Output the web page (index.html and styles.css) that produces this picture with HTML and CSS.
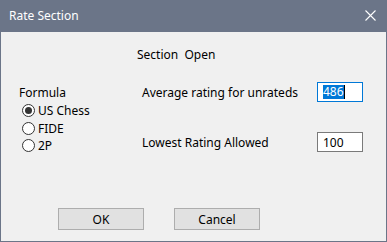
FILE: index.html
```html
<!DOCTYPE html>
<html lang="en">
<head>
    <meta charset="UTF-8">
    <title>Rate Section</title>
    <link rel="stylesheet" href="styles.css">
</head>
<body>
    <div class="window">
        <div class="titlebar">
            <span class="title">Rate Section</span>
            <svg class="close" width="11" height="11" viewBox="0 0 11 11">
                <path d="M0.5 0.5 L10.5 10.5 M10.5 0.5 L0.5 10.5" stroke="#ffffff" stroke-width="1.1" fill="none"/>
            </svg>
        </div>

        <div class="content">
            <div class="section-row">Section&nbsp;&nbsp;Open</div>

            <div class="main">
                <div class="formula">
                    <div class="formula-label">Formula</div>
                    <label class="radio"><span class="dot checked"></span>US Chess</label>
                    <label class="radio"><span class="dot"></span>FIDE</label>
                    <label class="radio last"><span class="dot"></span>2P</label>
                </div>

                <div class="fields">
                    <div class="field">
                        <span>Average rating for unrateds</span>
                        <div class="box focused"><span class="selected">486</span><span class="caret"></span></div>
                    </div>
                    <div class="field">
                        <span>Lowest Rating Allowed</span>
                        <div class="box">100</div>
                    </div>
                </div>
            </div>

            <div class="buttons">
                <button type="button">OK</button>
                <button type="button">Cancel</button>
            </div>
        </div>
    </div>
</body>
</html>
```

FILE: styles.css
```css
body {
    margin: 0;
    font-family: "Noto Sans", "Open Sans", sans-serif;
    font-size: 12px;
    color: #000000;
}

.window {
    width: 387px;
    height: 242px;
    box-sizing: border-box;
    border: 1px solid #6b7588;
    border-top: none;
    background-color: #f0f0f0;
    display: flex;
    flex-direction: column;
}

.titlebar {
    height: 31px;
    margin: 0 -1px;
    background-color: #6b7588;
    color: #ffffff;
    display: flex;
    align-items: center;
    justify-content: space-between;
    padding: 0 11px 1px 9px;
}

.title {
    font-size: 12px;
}

.content {
    flex: 1;
    display: flex;
    flex-direction: column;
}

.section-row {
    padding: 14px 0 0 136px;
    height: 18px;
    line-height: 18px;
}

.main {
    display: flex;
    margin-top: 18px;
}

.formula {
    width: 123px;
    padding: 2px 0 0 18px;
    display: flex;
    flex-direction: column;
}

.formula-label {
    height: 17px;
    line-height: 17px;
}

.radio {
    display: flex;
    align-items: center;
    gap: 3px;
    height: 17px;
    margin-top: 1px;
    padding-left: 3px;
}

.radio.last {
    margin-top: 0;
}

.dot {
    width: 13px;
    height: 13px;
    box-sizing: border-box;
    border: 1px solid #333333;
    border-radius: 50%;
    background-color: #ffffff;
    position: relative;
}

.dot.checked::after {
    content: "";
    position: absolute;
    left: 2px;
    top: 2px;
    width: 7px;
    height: 7px;
    border-radius: 50%;
    background-color: #333333;
}

.fields {
    display: flex;
    flex-direction: column;
    gap: 30px;
}

.field {
    display: flex;
    align-items: center;
    width: 221px;
    justify-content: space-between;
}

.box {
    width: 46px;
    height: 20px;
    box-sizing: border-box;
    border: 1px solid #7a7a7a;
    background-color: #ffffff;
    padding-left: 5px;
    display: flex;
    align-items: center;
}

.box.focused {
    border-color: #0078d7;
}

.selected {
    background-color: #0078d7;
    color: #ffffff;
    line-height: 14px;
}

.caret {
    width: 1px;
    height: 14px;
    background-color: #000000;
}

.buttons {
    display: flex;
    gap: 30px;
    padding-left: 57px;
    margin-top: auto;
    margin-bottom: 11px;
}

button {
    width: 86px;
    height: 22px;
    border: 1px solid #adadad;
    background-color: #e1e1e1;
    font-family: inherit;
    font-size: 12px;
    color: #000000;
    padding: 0;
}
```
